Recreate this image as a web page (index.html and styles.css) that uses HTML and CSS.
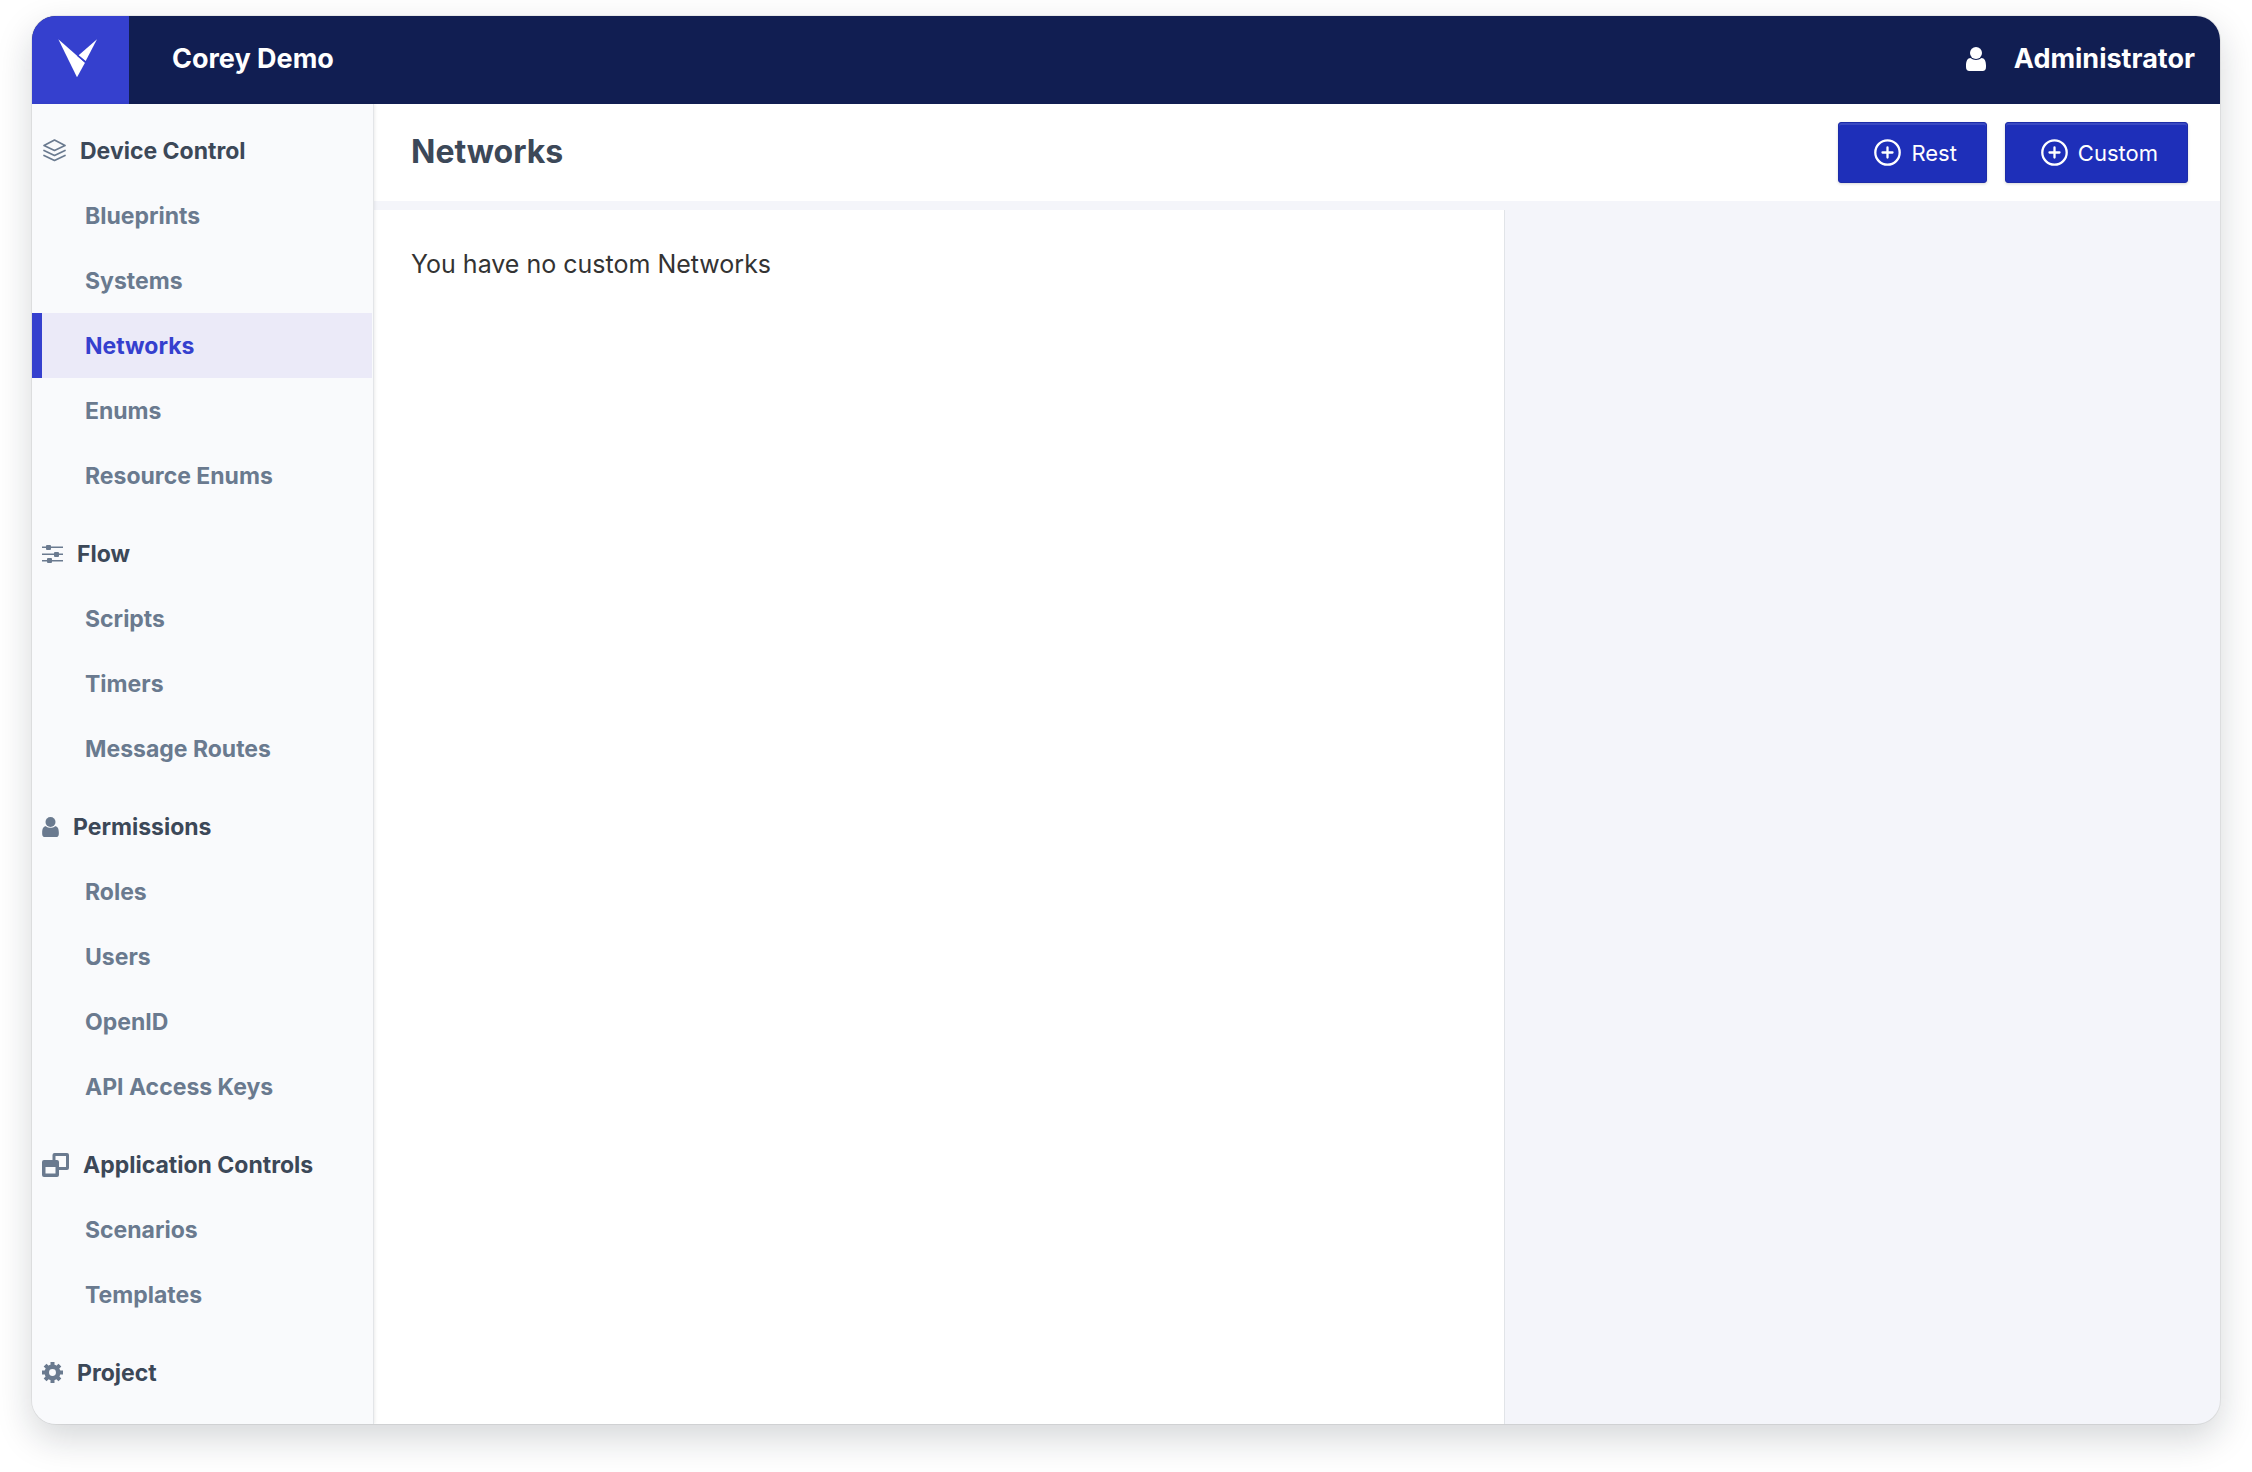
FILE: index.html
```html
<!DOCTYPE html>
<html lang="en">
<head>
<meta charset="utf-8">
<meta name="viewport" content="width=device-width, initial-scale=1">
<title>Networks - Corey Demo</title>
<link rel="stylesheet" href="styles.css">
</head>
<body>
<div class="app">
  <header class="topbar">
    <a class="logo" href="#" aria-label="Home">
      <svg width="39" height="39" viewBox="0 0 117 117" fill="#fff" aria-hidden="true"><path d="M1 1L81 71L57 115Z"/><path d="M117 1L62 49L83 66Z"/><path d="M58 49L86 73" stroke="#3540ce" stroke-width="4"/></svg>
    </a>
    <span class="project-name">Corey Demo</span>
    <a class="account" href="#">
      <svg width="20" height="24" viewBox="0 0 20 24" fill="currentColor" aria-hidden="true"><circle cx="10" cy="6" r="6"/><path d="M4.500 11C1.500 11 0 14 0 18.500V20Q0 24 3.500 24H16.500Q20 24 20 20V18.500C20 14 18.500 11 15.500 11C12.500 13.500 7.500 13.500 4.500 11Z"/></svg>
      <span>Administrator</span>
    </a>
  </header>
  <div class="body">
    <nav class="sidebar" aria-label="Project">
      <section>
        <h2><svg width="24" height="24" viewBox="0 0 24 24" fill="none" stroke="currentColor" stroke-width="1.700" stroke-linejoin="round" stroke-linecap="round" aria-hidden="true"><path d="M12.500 1L23 6.500L12.500 11.500L2 6.500ZM2 11.500L12.500 16.500L23 11.500M2 16.500L12.500 21.500L23 16.500"/></svg>Device Control</h2>
        <a href="#">Blueprints</a>
        <a href="#">Systems</a>
        <a href="#" class="active" aria-current="page">Networks</a>
        <a href="#">Enums</a>
        <a href="#">Resource Enums</a>
      </section>
      <section>
        <h2><svg width="21" height="20" viewBox="0 0 21 20" fill="currentColor" aria-hidden="true"><path d="M0 2.500H21V4H0ZM0 9.500H21V11H0ZM0 16H21V17.500H0Z"/><rect x="4" y="1" width="5" height="5" rx="1"/><rect x="12" y="8" width="5" height="5" rx="1"/><rect x="5" y="14" width="5" height="5" rx="1"/></svg>Flow</h2>
        <a href="#">Scripts</a>
        <a href="#">Timers</a>
        <a href="#">Message Routes</a>
      </section>
      <section>
        <h2><svg width="17" height="20" viewBox="0 0 20 24" fill="currentColor" aria-hidden="true"><circle cx="10" cy="6" r="6"/><path d="M4.500 11C1.500 11 0 14 0 18.500V20Q0 24 3.500 24H16.500Q20 24 20 20V18.500C20 14 18.500 11 15.500 11C12.500 13.500 7.500 13.500 4.500 11Z"/></svg>Permissions</h2>
        <a href="#">Roles</a>
        <a href="#">Users</a>
        <a href="#">OpenID</a>
        <a href="#">API Access Keys</a>
      </section>
      <section>
        <h2><svg width="27" height="24" viewBox="0 0 27 24" fill="currentColor" aria-hidden="true"><path fill-rule="evenodd" d="M2 7H15Q17 7 17 9V22Q17 24 15 24H2Q0 24 0 22V9Q0 7 2 7ZM3.500 14V20.500H13.500V14Z"/><path d="M10.500 7V2Q10.500 0 12.500 0H25Q27 0 27 2V15Q27 17 25 17H17V14H24V3H13.500V7Z"/></svg>Application Controls</h2>
        <a href="#">Scenarios</a>
        <a href="#">Templates</a>
      </section>
      <section>
        <h2><svg width="21" height="21" viewBox="0 0 21 21" aria-hidden="true"><circle cx="10.500" cy="10.500" r="5.700" fill="none" stroke="currentColor" stroke-width="4.500"/><g stroke="currentColor" stroke-width="4"><path d="M10.500 0V4M10.500 17V21M0 10.500H4M17 10.500H21M3.100 3.100L6 6M15 15L17.900 17.900M17.900 3.100L15 6M6 15L3.100 17.900"/></g></svg>Project</h2>
      </section>
    </nav>
    <main class="main">
      <div class="toolbar">
        <h1>Networks</h1>
        <button type="button"><svg width="27" height="27" viewBox="0 0 27 27" fill="none" stroke="currentColor" stroke-width="2.300" stroke-linecap="round" aria-hidden="true"><circle cx="13.500" cy="13.500" r="12.200"/><path d="M13.500 8.500V18.500M8.500 13.500H18.500"/></svg>Rest</button>
        <button type="button"><svg width="27" height="27" viewBox="0 0 27 27" fill="none" stroke="currentColor" stroke-width="2.300" stroke-linecap="round" aria-hidden="true"><circle cx="13.500" cy="13.500" r="12.200"/><path d="M13.500 8.500V18.500M8.500 13.500H18.500"/></svg>Custom</button>
      </div>
      <div class="panes">
        <div class="list"><p>You have no custom Networks</p></div>
      </div>
    </main>
  </div>
</div>
</body>
</html>
```

FILE: styles.css
```css
* { box-sizing: border-box; }

body {
  margin: 0;
  padding: 16px 32px 48px;
  background: #fff;
  color: #333;
  font-family: Inter, "Liberation Sans", sans-serif;
  font-size: 24px;
  line-height: 32px;
}

h1, h2, p { margin: 0; }
a { color: inherit; text-decoration: none; }
svg { flex: none; }

.app {
  display: flex;
  flex-direction: column;
  min-height: calc(100vh - 64px);
  border-radius: 24px;
  overflow: hidden;
  background: #f4f5fa;
  box-shadow: 0 0 0 1px rgba(0, 0, 0, 0.06), 0 14px 36px rgba(15, 25, 40, 0.18);
}

.topbar {
  display: flex;
  align-items: stretch;
  height: 88px;
  background: #111e52;
  color: #fff;
  font-size: 27px;
  font-weight: 650;
}

.logo {
  display: flex;
  align-items: center;
  justify-content: center;
  width: 97px;
  padding: 0 6px 4px 0;
  background: #3540ce;
}

.project-name {
  display: flex;
  flex: 1;
  align-items: center;
  padding: 0 43px 2px;
}

.account {
  display: flex;
  align-items: center;
  gap: 28px;
  padding: 0 25px 2px 0;
}

.body {
  display: flex;
  flex: 1;
}

.sidebar {
  display: flex;
  flex-direction: column;
  gap: 13px;
  flex: none;
  width: 342px;
  padding: 14px 1px 0 0;
  border-right: 1px solid #e3e5e8;
  background: #f9fafc;
  box-shadow: 1px 0 3px rgba(0, 0, 0, 0.08);
  z-index: 1;
  font-size: 23px;
  font-weight: 650;
}

.sidebar h2 {
  display: flex;
  align-items: center;
  gap: 14px;
  height: 65px;
  padding-left: 10px;
  color: #3c4858;
  font-size: 23px;
  font-weight: 650;
}

.sidebar svg { color: #6a7a8f; }

.sidebar a {
  display: flex;
  align-items: center;
  height: 65px;
  border-left: 10px solid transparent;
  padding-left: 43px;
  color: #6a7a8f;
}

.sidebar .active {
  border-left-color: #3540ce;
  background: #ebeaf8;
  color: #3540ce;
}

.main {
  display: flex;
  flex: 1;
  flex-direction: column;
}

.toolbar {
  display: flex;
  align-items: center;
  gap: 18px;
  padding: 18px 32px 18px 37px;
  background: #fff;
}

.toolbar h1 {
  flex: 1;
  padding-bottom: 2px;
  color: #3c4858;
  font-size: 32px;
  font-weight: 700;
  line-height: 40px;
}

.toolbar button {
  display: flex;
  align-items: center;
  gap: 10px;
  height: 61px;
  padding: 0 29px 0 35px;
  border: 1px solid #1c2ca8;
  border-radius: 3px;
  background: #1e2fb9;
  box-shadow: inset 0 2px 0 rgba(255, 255, 255, 0.12), 0 1px 3px rgba(0, 0, 0, 0.16);
  color: #fff;
  font: inherit;
  font-size: 22px;
}

.panes {
  display: grid;
  flex: 1;
  grid-template-columns: 1131fr 715fr;
  padding-top: 9px;
}

.list {
  padding: 38px 37px;
  border-right: 1px solid #e1e4e8;
  background: #fff;
  font-size: 25px;
}
```
